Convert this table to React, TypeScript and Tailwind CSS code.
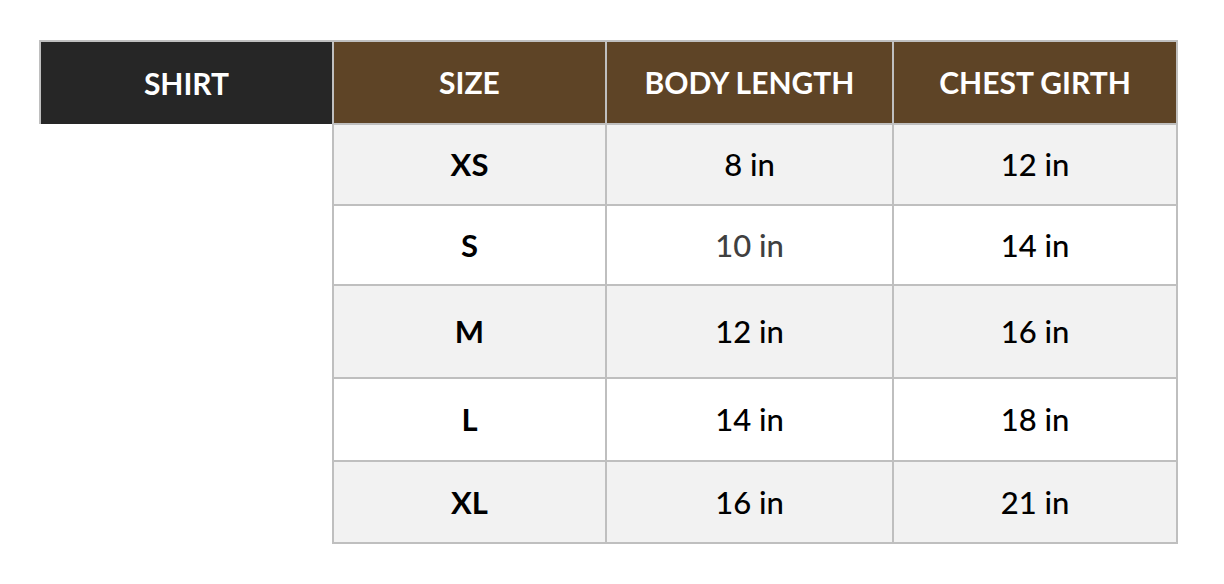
import React from "react";

const rows = [
  { size: "XS", body: "8 in", chest: "12 in", bg: "bg-[#f2f2f2]", h: "h-[81px]" },
  { size: "S", body: "10 in", chest: "14 in", bg: "bg-white", h: "h-[80px]", muted: true },
  { size: "M", body: "12 in", chest: "16 in", bg: "bg-[#f2f2f2]", h: "h-[93px]" },
  { size: "L", body: "14 in", chest: "18 in", bg: "bg-white", h: "h-[83px]" },
  { size: "XL", body: "16 in", chest: "21 in", bg: "bg-[#f2f2f2]", h: "h-[82px]" },
];

export default function App() {
  return (
    <div
      className="w-[1224px] h-[584px] bg-white pt-[40px] pl-[39px]"
      style={{ fontFamily: "Lato, 'Open Sans', sans-serif" }}
    >
      <table className="table-fixed border-collapse w-[1137px]">
        <colgroup>
          <col className="w-[293px]" />
          <col className="w-[273px]" />
          <col className="w-[287px]" />
          <col className="w-[284px]" />
        </colgroup>
        <thead>
          <tr className="h-[83px]">
            <th className="bg-[#262626] text-white text-[30px] font-bold border-2 border-[#bfbfbf] border-b-0 align-middle">
              SHIRT
            </th>
            <th className="bg-[#5e4426] text-white text-[30px] font-bold border-2 border-[#bfbfbf] align-middle">
              SIZE
            </th>
            <th className="bg-[#5e4426] text-white text-[30px] font-bold border-2 border-[#bfbfbf] align-middle">
              BODY LENGTH
            </th>
            <th className="bg-[#5e4426] text-white text-[30px] font-bold border-2 border-[#bfbfbf] align-middle">
              CHEST GIRTH
            </th>
          </tr>
        </thead>
        <tbody>
          {rows.map((r, i) => (
            <tr key={r.size} className={r.h}>
              {i === 0 && <td rowSpan={5} className="border-0 bg-white" />}
              <td className={`${r.bg} border-2 border-[#bfbfbf] text-center text-[31px] font-bold text-black`}>
                {r.size}
              </td>
              <td
                className={`${r.bg} border-2 border-[#bfbfbf] text-center text-[31px] font-medium ${
                  r.muted ? "text-[#404040]" : "text-black"
                }`}
              >
                {r.body}
              </td>
              <td className={`${r.bg} border-2 border-[#bfbfbf] text-center text-[31px] font-medium text-black`}>
                {r.chest}
              </td>
            </tr>
          ))}
        </tbody>
      </table>
    </div>
  );
}
